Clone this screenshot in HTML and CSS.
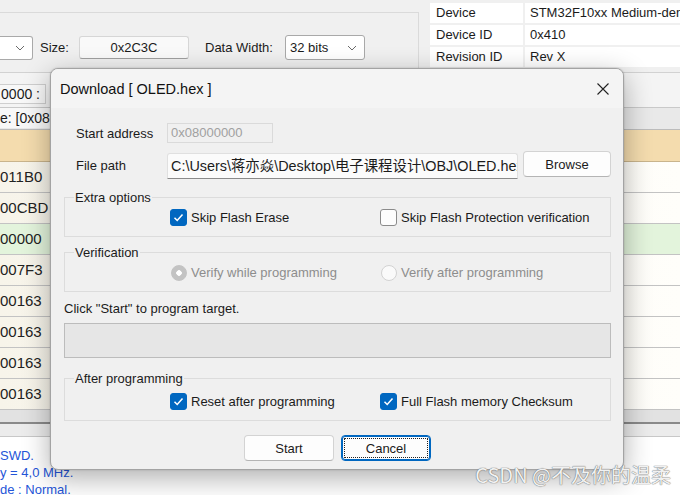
FILE: index.html
```html
<!DOCTYPE html>
<html lang="zh-CN">
<head>
    <meta charset="UTF-8">
    <title>ST-LINK Utility - Download</title>
    <link rel="stylesheet" href="styles.css">
</head>
<body>
    <div class="app">
        <div class="top">
            <div class="mem-panel">
                <div class="mem-controls">
                    <div class="combo combo-cut">
                        <svg class="chev" width="10" height="6" viewBox="0 0 10 6"><polyline points="1,1 5,5 9,1" fill="none" stroke="#6b6b6b" stroke-width="1"/></svg>
                    </div>
                    <span class="lbl lbl-size">Size:</span>
                    <div class="field">0x2C3C</div>
                    <span class="lbl lbl-width">Data Width:</span>
                    <div class="combo combo-width">
                        <span>32 bits</span>
                        <svg class="chev" width="10" height="6" viewBox="0 0 10 6"><polyline points="1,1 5,5 9,1" fill="none" stroke="#6b6b6b" stroke-width="1"/></svg>
                    </div>
                </div>
            </div>
            <div class="devinfo">
                <div class="dev-row"><div class="dev-key">Device</div><div class="dev-val">STM32F10xx Medium-density</div></div>
                <div class="dev-row"><div class="dev-key">Device ID</div><div class="dev-val">0x410</div></div>
                <div class="dev-row"><div class="dev-key">Revision ID</div><div class="dev-val">Rev X</div></div>
            </div>
        </div>

        <div class="memview">
            <div class="addr-row"><div class="addr-box">0000 :</div></div>
            <div class="range-row"><span class="range-label">e: [0x08000000 - 0x08002C3C]</span></div>
            <div class="mem-head"></div>
            <div class="mem-row">011B0</div>
            <div class="mem-row">00CBD</div>
            <div class="mem-row mem-row-hit">00000</div>
            <div class="mem-row">007F3</div>
            <div class="mem-row">00163</div>
            <div class="mem-row">00163</div>
            <div class="mem-row">00163</div>
            <div class="mem-row">00163</div>
            <div class="hscroll"></div>
        </div>

        <div class="log">
            <p>SWD.</p>
            <p>y = 4,0 MHz.</p>
            <p>de : Normal.</p>
        </div>
    </div>

    <div class="dialog">
        <div class="dlg-title">
            <span>Download [ OLED.hex ]</span>
            <svg class="dlg-close" width="12" height="12" viewBox="0 0 12 12"><path d="M0.5 0.5 L11.5 11.5 M11.5 0.5 L0.5 11.5" stroke="#222" stroke-width="1.1" fill="none"/></svg>
        </div>

        <div class="dlg-body">
            <div class="form-row row-addr">
                <span class="form-lbl">Start address</span>
                <div class="input input-disabled">0x08000000</div>
            </div>
            <div class="form-row row-path">
                <span class="form-lbl">File path</span>
                <div class="input input-path">C:\Users\蒋亦焱\Desktop\电子课程设计\OBJ\OLED.hex</div>
                <button class="btn btn-browse">Browse</button>
            </div>

            <fieldset class="group group-extra">
                <legend>Extra options</legend>
                <div class="opts">
                    <div class="opt">
                        <span class="check on"><svg width="17" height="17" viewBox="0 0 17 17"><polyline points="4.5,8.8 7.2,11.5 12.5,5.5" fill="none" stroke="#fff" stroke-width="1.5"/></svg></span>
                        Skip Flash Erase
                    </div>
                    <div class="opt">
                        <span class="check"></span>
                        Skip Flash Protection verification
                    </div>
                </div>
            </fieldset>

            <fieldset class="group group-verify">
                <legend>Verification</legend>
                <div class="opts">
                    <div class="opt opt-disabled"><span class="radio on"></span>Verify while programming</div>
                    <div class="opt opt-disabled"><span class="radio"></span>Verify after programming</div>
                </div>
            </fieldset>

            <p class="note">Click "Start" to program target.</p>
            <div class="progress"></div>

            <fieldset class="group group-after">
                <legend>After programming</legend>
                <div class="opts">
                    <div class="opt">
                        <span class="check on"><svg width="17" height="17" viewBox="0 0 17 17"><polyline points="4.5,8.8 7.2,11.5 12.5,5.5" fill="none" stroke="#fff" stroke-width="1.5"/></svg></span>
                        Reset after programming
                    </div>
                    <div class="opt">
                        <span class="check on"><svg width="17" height="17" viewBox="0 0 17 17"><polyline points="4.5,8.8 7.2,11.5 12.5,5.5" fill="none" stroke="#fff" stroke-width="1.5"/></svg></span>
                        Full Flash memory Checksum
                    </div>
                </div>
            </fieldset>

            <div class="actions">
                <button class="btn">Start</button>
                <button class="btn btn-focus">Cancel</button>
            </div>
        </div>
    </div>

    <div class="watermark">CSDN @不及你的温柔</div>
</body>
</html>
```

FILE: styles.css
```css
* {
    box-sizing: border-box;
}

body {
    margin: 0;
    width: 680px;
    height: 495px;
    overflow: hidden;
    position: relative;
    background: #f0f0f0;
    font-family: "Liberation Sans", Arial, sans-serif;
    font-size: 13px;
    color: #1b1b1b;
}

.app {
    display: flex;
    flex-direction: column;
    height: 495px;
}

/* top strip: memory controls + device info */
.top {
    display: flex;
    flex-shrink: 0;
    height: 72px;
}

.mem-panel {
    width: 419px;
    flex-shrink: 0;
    margin-top: 12px;
    border-top: 1px solid #dadada;
    border-right: 1px solid #dadada;
    padding-top: 22px;
}

.mem-controls {
    display: flex;
    align-items: center;
    height: 25px;
}

.combo {
    display: flex;
    align-items: center;
    justify-content: space-between;
    height: 25px;
    padding: 0 7px 0 4px;
    background: #fff;
    border: 1px solid #a9a9a9;
    border-radius: 3px;
}

.combo-cut {
    width: 33px;
    height: 24px;
    border-left: none;
    border-radius: 0 3px 3px 0;
    justify-content: flex-end;
}

.combo-width {
    width: 80px;
}

.lbl-size {
    width: 46px;
    padding-left: 7px;
}

.lbl-width {
    width: 96px;
    padding-left: 16px;
}

.field {
    width: 110px;
    height: 23px;
    line-height: 21px;
    text-align: center;
    background: #f9f9f9;
    border: 1px solid #d6d6d6;
    border-bottom-color: #9f9f9f;
    border-radius: 3px;
}

.devinfo {
    flex: 1;
    min-width: 0;
    margin-left: 11px;
    padding-top: 3px;
    display: flex;
    flex-direction: column;
    gap: 2px;
}

.dev-row {
    display: flex;
    gap: 2px;
    height: 20px;
    line-height: 20px;
}

.dev-key {
    width: 93px;
    flex-shrink: 0;
    padding-left: 6px;
    background: #fff;
}

.dev-val {
    flex: 1;
    padding-left: 5px;
    background: #fff;
    white-space: nowrap;
    overflow: hidden;
}

/* memory grid */
.memview {
    flex-shrink: 0;
    border-top: 1px solid #d2d2d2;
}

.addr-row {
    height: 35px;
    padding-top: 11px;
    background: #f4f4f4;
    border-bottom: 1px solid #c9c9c9;
}

.addr-box {
    width: 46px;
    height: 20px;
    line-height: 18px;
    padding-right: 5px;
    text-align: right;
    font-size: 14px;
    background: #f8f8f8;
    border: 1px solid #cfcfcf;
    border-left: none;
}

.range-row {
    height: 22px;
    line-height: 20px;
    font-size: 14px;
    white-space: nowrap;
    background: #e9e9e9;
    border-bottom: 1px solid #bcbcbc;
}

.range-label {
    display: inline-block;
    background: #f8f8f8;
    padding-right: 6px;
}

.mem-head {
    height: 32px;
    background: #f4dcae;
    border-bottom: 1px solid #c9b48c;
}

.mem-row {
    height: 31px;
    line-height: 30px;
    font-size: 15px;
    color: #222;
    background: linear-gradient(to right, #f7f4ea, #fffefa);
    border-bottom: 1px solid #c3c3c3;
}

.mem-row-hit {
    background: #e3f4dc;
}

.hscroll {
    height: 27px;
    background: linear-gradient(to bottom, #e2e2e2 0, #e2e2e2 12px, #8a8a8a 12px, #8a8a8a 14px, #ececec 14px);
    border-bottom: 1px solid #c8c8c8;
}

.log {
    flex: 1;
    min-height: 0;
    overflow: hidden;
    padding-top: 10px;
    background: #fff;
    color: #2455d8;
    font-size: 13px;
    line-height: 17px;
}

.log p {
    margin: 0;
}

/* download dialog */
.dialog {
    position: absolute;
    left: 50px;
    top: 68px;
    width: 574px;
    height: 402px;
    display: flex;
    flex-direction: column;
    background: #f0f0f0;
    border: 1px solid #a3a3a3;
    border-radius: 8px;
    box-shadow: 0 8px 28px rgba(0, 0, 0, 0.32), 0 0 2px rgba(0, 0, 0, 0.2);
    overflow: hidden;
}

.dlg-title {
    height: 39px;
    display: flex;
    align-items: center;
    justify-content: space-between;
    padding: 0 14px 0 9px;
    background: #f4f4f4;
    font-size: 14.5px;
    color: #111;
}

.dlg-body {
    padding: 0 12px 0 13px;
}

.form-row {
    display: flex;
    align-items: center;
}

.row-addr {
    margin-top: 15px;
    height: 20px;
}

.row-path {
    margin-top: 8px;
    height: 28px;
    align-items: flex-start;
}

.form-lbl {
    width: 103px;
    flex-shrink: 0;
    padding-left: 12px;
}

.row-path .form-lbl {
    line-height: 28px;
    margin-top: 1px;
}

.input {
    padding-left: 3px;
    white-space: nowrap;
    overflow: hidden;
}

.input-disabled {
    width: 106px;
    height: 20px;
    line-height: 18px;
    color: #a0a0a0;
    background: #f0f0f0;
    border: 1px solid #dadada;
}

.input-path {
    width: 351px;
    flex-shrink: 0;
    height: 26px;
    margin-top: 2px;
    line-height: 24px;
    font-family: "Liberation Sans", "Noto Sans CJK SC", sans-serif;
    font-size: 14.4px;
    background: #fbfbfb;
    border: 1px solid #e0e0e0;
    border-bottom-color: #8a8a8a;
    border-radius: 3px 3px 0 0;
}

.btn {
    width: 90px;
    height: 26px;
    padding: 0;
    font-family: inherit;
    font-size: 13px;
    color: #1b1b1b;
    background: #fdfdfd;
    border: 1px solid #d3d3d3;
    border-bottom-color: #b4b4b4;
    border-radius: 4px;
}

.btn-browse {
    width: 88px;
    margin-left: 5px;
}

.btn-focus {
    border: 1px solid #0067c0;
    box-shadow: inset 0 0 0 1px #0067c0;
    outline: 1px dotted #222;
    outline-offset: -4px;
}

.group {
    margin: 0;
    min-width: 0;
    border: 1px solid #dcdcdc;
    padding: 4px 0 10px 0;
}

.group legend {
    margin-left: 9px;
    padding: 0 1px;
    line-height: 15px;
}

.group-extra {
    margin-top: 11px;
}

.group-verify {
    margin-top: 8px;
}

.group-after {
    margin-top: 13px;
    padding-top: 7px;
}

.opts {
    display: flex;
    padding-left: 105px;
}

.opt {
    display: flex;
    align-items: center;
    height: 17px;
    width: 210px;
    white-space: nowrap;
}

.opt-disabled {
    color: #8d8d8d;
}

.check {
    width: 17px;
    height: 17px;
    margin-right: 4px;
    background: #fdfdfd;
    border: 1px solid #8b8b8b;
    border-radius: 3px;
}

.check.on {
    background: #0067c0;
    border-color: #0067c0;
}

.check svg {
    display: block;
    margin: -1px;
}

.radio {
    width: 16px;
    height: 16px;
    margin: 0 4px 0 1px;
    border-radius: 50%;
    background: #fafafa;
    border: 1px solid #d2d2d2;
}

.radio.on {
    background: radial-gradient(circle, #fff 0, #fff 2.5px, #c3c3c3 3px);
    border-color: #c3c3c3;
}

.note {
    margin: 9px 0 0;
    line-height: 16px;
}

.progress {
    margin-top: 6px;
    height: 35px;
    background: #e6e6e6;
    border: 1px solid #bcbcbc;
}

.actions {
    margin-top: 14px;
    display: flex;
    justify-content: center;
    gap: 7px;
}

.watermark {
    position: absolute;
    right: 9px;
    top: 460px;
    font-family: "Noto Sans CJK SC", sans-serif;
    font-size: 20px;
    color: #f1f1f1;
    text-shadow: 0 0 1px #6d6d6d, 0 0 1px #6d6d6d;
    white-space: nowrap;
}
```
